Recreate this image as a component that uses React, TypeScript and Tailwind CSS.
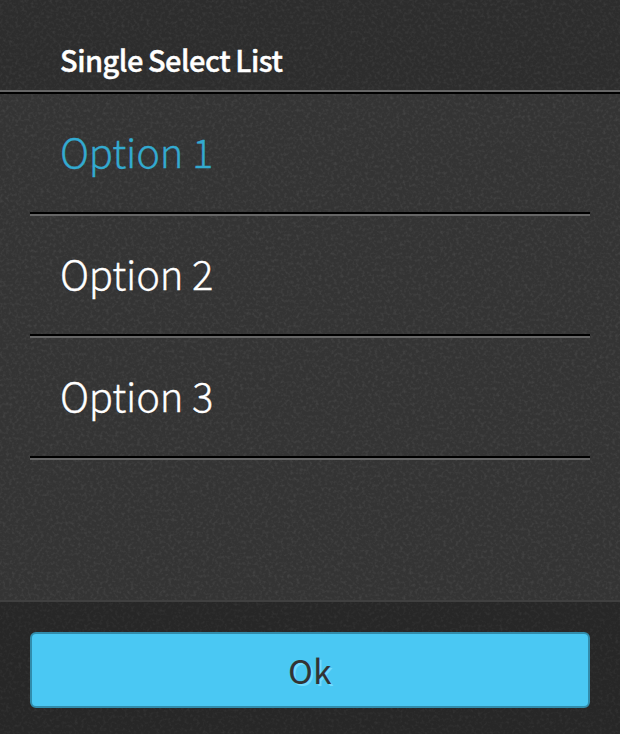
import React from "react";

const options = ["Option 1", "Option 2", "Option 3"];

function Grain() {
  return (
    <svg className="pointer-events-none absolute inset-0 h-full w-full" aria-hidden="true">
      <filter id="grain" x="0" y="0" width="100%" height="100%" colorInterpolationFilters="sRGB">
        <feTurbulence type="fractalNoise" baseFrequency="0.32" numOctaves="2" seed="7" />
        <feColorMatrix values="0 0 0 0 1  0 0 0 0 1  0 0 0 0 1  0.18 0 0 0 -0.083" />
      </filter>
      <rect width="100%" height="100%" filter="url(#grain)" />
    </svg>
  );
}

export default function App() {
  return (
    <div className="relative flex h-[734px] w-[620px] flex-col overflow-hidden bg-[#343434] font-['Noto_Sans_CJK_SC',sans-serif] text-white">
      <Grain />
      <header className="relative flex h-[94px] shrink-0 flex-col border-b-2 border-black">
        <div className="flex flex-1 items-end border-b-2 border-[#666] bg-black/12 px-[60px] pb-[11px]">
          <h1 className="text-[29px] leading-[40px] font-medium tracking-[-0.5px] whitespace-nowrap [-webkit-text-stroke:0.4px_white] [word-spacing:-1px]">Single Select List</h1>
        </div>
      </header>
      <ul className="relative flex-1 px-[30px]">
        {options.map((option, i) => (
          <li key={option} className="border-b-2 border-[#666]">
            <div className={`flex h-[120px] items-center border-b-2 border-black px-[30px] pb-[5px] text-[40px] leading-none font-light tracking-[-0.2px] [-webkit-text-stroke:0.3px_currentColor] ${i === 0 ? "text-[#33aad0]" : "text-white"}`}>
              <span>{option}</span>
            </div>
          </li>
        ))}
      </ul>
      <footer className="relative flex h-[134px] shrink-0 flex-col border-t-2 border-[#404040] bg-black/25 px-[30px] pt-[30px]">
        <button className="flex h-[76px] items-center justify-center rounded-[6px] border-2 border-[#318cab] bg-[#4ac8f3] text-[33px] leading-none font-normal tracking-[0.5px] text-[#333] [-webkit-text-stroke:0.2px_#333] [text-shadow:2px_2px_0_#70dcff]">
          <span>Ok</span>
        </button>
      </footer>
    </div>
  );
}
